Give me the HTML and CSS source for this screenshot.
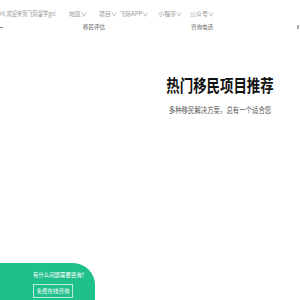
FILE: index.html
```html
<!DOCTYPE html>
<html lang="zh">
<head>
<meta charset="utf-8">
<link rel="stylesheet" href="styles.css">
</head>
<body>
<header class="topbar">
  <div class="welcome-box"><span class="welcome">Hi,欢迎来到飞际留学go!</span></div>
  <nav class="menu">
    <span class="item w-region">地区∨</span>
    <span class="item w-proj">项目∨</span>
    <span class="item w-app">飞际APP∨</span>
    <span class="item w-mini">小程序∨</span>
    <span class="item">公众号∨</span>
  </nav>
</header>
<div class="subnav">
  <span class="dash"></span>
  <span class="sub sub-eval">移民评估</span>
  <span class="sub sub-tel">咨询电话</span>
  <span class="mark"></span>
</div>
<section class="hero">
  <h1 class="title">热门移民项目推荐</h1>
  <p class="subtitle">多种移民解决方案，总有一个适合您</p>
</section>
<aside class="consult">
  <p class="consult-q">有什么问题需要咨询?</p>
  <span class="consult-btn">免费在线咨询</span>
</aside>
</body>
</html>
```
FILE: styles.css
```css
html, body {
  margin: 0;
  padding: 0;
  width: 300px;
  height: 300px;
  overflow: hidden;
  background: #fff;
  font-family: "Noto Sans CJK SC", "Noto Sans", sans-serif;
}
.topbar {
  display: flex;
  align-items: center;
  height: 26px;
  font-size: 6px;
  color: #9a9a9a;
  white-space: nowrap;
}
.welcome-box {
  width: 69px;
  flex: none;
}
.welcome {
  display: inline-block;
  font-size: 6.5px;
  transform: scaleX(0.8);
  transform-origin: left center;
}
.menu {
  display: flex;
}
.item {
  display: inline-block;
  flex: none;
}
.w-region { width: 30px; }
.w-proj { width: 20px; }
.w-app { width: 39px; }
.w-mini { width: 32px; }
.subnav {
  display: flex;
  align-items: center;
  height: 8px;
  margin-top: -3px;
  font-size: 5.5px;
  line-height: 8px;
  color: #666;
}
.dash {
  width: 3px;
  height: 1px;
  background: #888;
}
.sub {
  display: inline-block;
  flex: none;
}
.sub-eval { margin-left: 80px; }
.sub-tel { margin-left: 86px; }
.mark {
  width: 2px;
  height: 4px;
  background: #a9a4b8;
  margin-left: auto;
  margin-right: 1px;
}
.hero {
  padding-left: 140px;
  display: flex;
  flex-direction: column;
  align-items: center;
  margin-top: 43px;
}
.title {
  margin: 0;
  font-size: 17px;
  line-height: 22px;
  font-weight: 700;
  color: #111;
  white-space: nowrap;
  transform: scaleX(0.79);
}
.subtitle {
  margin: 9px 0 0;
  font-size: 8px;
  line-height: 10px;
  color: #555;
  white-space: nowrap;
  transform: scaleX(0.8);
}
.consult {
  position: fixed;
  left: 0;
  bottom: 0;
  width: 95px;
  height: 37px;
  background: #1fc08c;
  border-top-right-radius: 22px;
  display: flex;
  flex-direction: column;
  align-items: flex-start;
  padding-left: 33px;
  box-sizing: border-box;
  color: #fff;
}
.consult-q {
  margin: 8px 0 0;
  font-size: 6px;
  line-height: 8px;
  white-space: nowrap;
  transform: scaleX(0.9);
  transform-origin: left center;
}
.consult-btn {
  margin-top: 5px;
  width: 40px;
  height: 14px;
  border: 1px solid rgba(255,255,255,0.7);
  box-sizing: border-box;
  font-size: 5.5px;
  line-height: 12px;
  text-align: center;
  white-space: nowrap;
}
```
